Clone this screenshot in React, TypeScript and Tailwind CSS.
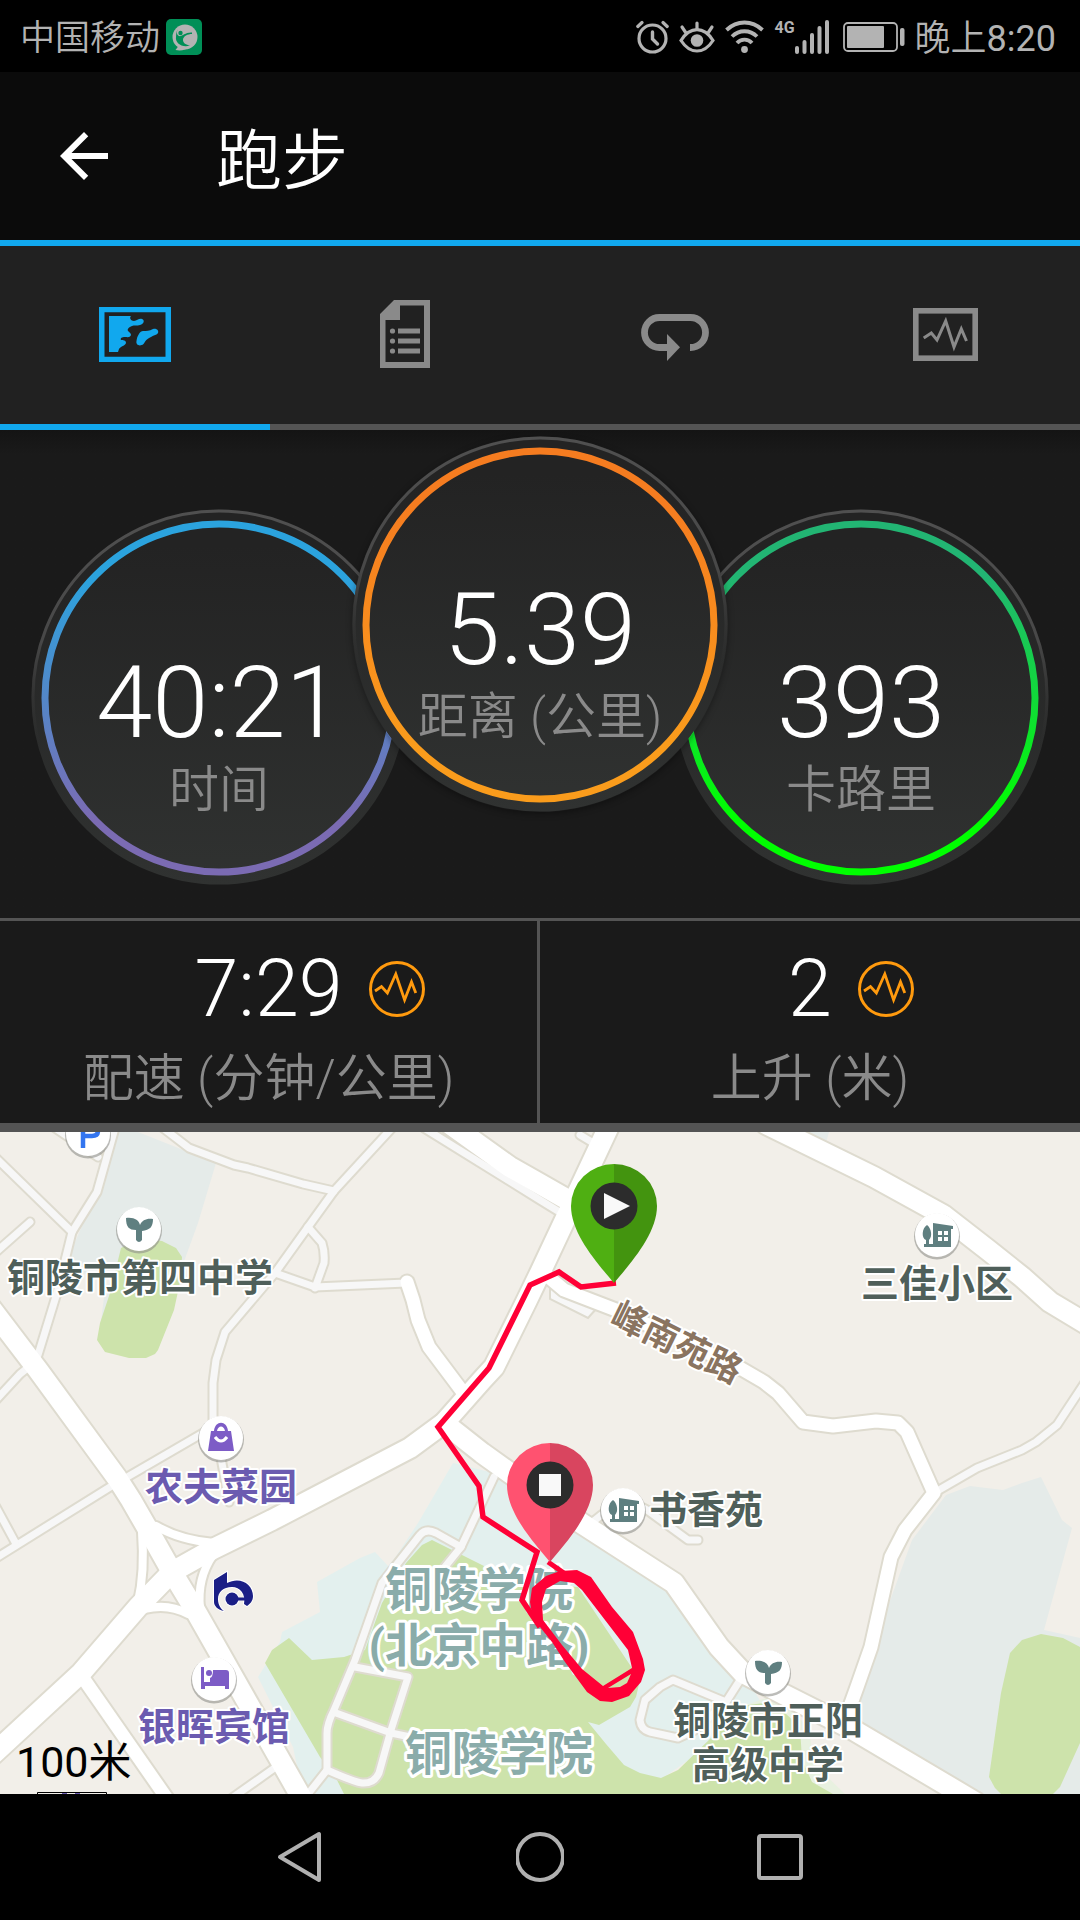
import React, { useState } from 'react';
import clsx from 'clsx';
import { MdArrowBack } from 'react-icons/md';

type IconProps = { className?: string };

const MapIcon = ({ className }: IconProps) => (
  <svg className={className} width="72" height="55" viewBox="0 0 72 55" fill="currentColor">
    <path fillRule="evenodd" d="M0 0H72V55H0ZM5.5 5.2V49.7H66.5V5.2Z" />
    <path d="M10 9H32C30 11 32 14 35 14C38 14 40 11 43 12C46 13 45 17 41 18C38 19 35 18 33 19C30 20 28 22 29 24C30 25 32 26 32 28C31 31 28 30 26 30C23 30 21 31 22 33C24 33 27 33 27 36C26 39 22 39 20 42L19 45H10Z" />
    <path d="M37.500 34C38 29 41 24 44 24C48 24 50 24 54 22C58 21 60 24 59 26C58 28 55 28 52 30C46 33 47 34 44.500 37C41 40 36.500 38 37.500 34Z" />
  </svg>
);

const ReportIcon = ({ className }: IconProps) => (
  <svg className={className} width="50" height="68" viewBox="0 0 50 68" fill="currentColor">
    <path fillRule="evenodd" d="M14 0H50V68H0V14ZM20 5.500V20H5.500V62H44V5.500Z" />
    {[31, 41, 51].map((y) => (
      <g key={y}>
        <circle cx="12.500" cy={y} r="2.600" />
        <rect x="18" y={y - 2.5} width="22" height="5" />
      </g>
    ))}
  </svg>
);

const LapsIcon = ({ className }: IconProps) => (
  <svg className={className} width="68" height="54" viewBox="0 -7 68 54" fill="none">
    <path d="M27 33.500H18.500A15 15 0 0 1 18.500 3.500H49.500A15 15 0 0 1 49.500 33.500H49" stroke="currentColor" strokeWidth="6.800" />
    <path d="M26 20L39 33.300L26 47Z" fill="currentColor" />
  </svg>
);

const ChartIcon = ({ className }: IconProps) => (
  <svg className={className} width="65" height="53" viewBox="0 0 65 53" fill="none" stroke="currentColor">
    <rect x="2.800" y="2.800" width="59.400" height="47.400" strokeWidth="5.600" />
    <path d="M10.700 30L18.300 25L24 32L32.700 13L41 39L48.300 21L53.500 33" strokeWidth="3" />
  </svg>
);

const PulseIcon = ({ className }: IconProps) => (
  <svg className={className} width="56" height="58" viewBox="0 0 56 58" fill="none" stroke="currentColor">
    <circle cx="28" cy="29" r="26.500" strokeWidth="3" />
    <path d="M6 31L12.500 26.500L18.400 33L26.800 14L35.600 40L42.500 22L46.800 33" strokeWidth="2.800" />
  </svg>
);

const TABS = [
  { id: 'map', label: '地图', Icon: MapIcon },
  { id: 'details', label: '详情', Icon: ReportIcon },
  { id: 'laps', label: '计圈', Icon: LapsIcon },
  { id: 'charts', label: '图表', Icon: ChartIcon },
];

const STATS = [
  { value: '7:29', label: '配速 (分钟/公里)' },
  { value: '2', label: '上升 (米)' },
];

const StatusBar = () => (
  <div className="flex h-[72px] items-center justify-between bg-black pt-px pr-6 pl-5 text-[35px] leading-10 text-[#b3b3b3]">
    <div className="flex items-center gap-1.5">
      <span className="pt-1 font-[350]">中国移动</span>
      <svg width="36" height="36" viewBox="0 0 36 36">
        <rect width="36" height="36" rx="5" fill="#008f57" />
        <circle cx="19" cy="18" r="12.500" fill="#b3b3b3" />
        <path d="M14 25L9.500 31C15 32 20 31 23 28Z" fill="#b3b3b3" />
        <circle cx="14.500" cy="14" r="2.200" fill="#008f57" />
        <path d="M12 10C10 13 11 16 13 17C16 18 19 13 26 13.500V15C22 15 17 17 17 21C17 24 20 26 24 26.500C16 29 9 24 10 18C10 14 11 11 12 10Z" fill="#008f57" />
      </svg>
    </div>

    <div className="flex items-center gap-2.5">
      {/* alarm */}
      <svg width="33" height="34" viewBox="0 0 33 34" fill="none" stroke="currentColor" strokeLinecap="round">
        <circle cx="16.500" cy="18.500" r="13.500" strokeWidth="3.200" />
        <path d="M16.500 12V19L21.500 24" strokeWidth="3.400" />
        <path d="M1.800 6.500L6 2.500M31.200 6.500L27 2.500" strokeWidth="3.200" />
      </svg>
      {/* eye comfort */}
      <svg width="36" height="34" viewBox="0 0 36 34" fill="none" stroke="currentColor" strokeLinecap="round">
        <path d="M2 20.500C11 6 25 6 34 20.500C25 34.500 11 34.500 2 20.500Z" strokeWidth="3.200" />
        <circle cx="18" cy="20.500" r="6.300" fill="currentColor" stroke="none" />
        <path d="M18 3V9M3 7L7 13M33 7L29 13" strokeWidth="3.200" />
      </svg>
      {/* wifi */}
      <svg width="39" height="34" viewBox="0 0 39 34" fill="none" stroke="currentColor">
        <path d="M1.500 10C12 0 27 0 37.500 10" strokeWidth="3.800" />
        <path d="M7 16.500C14 9.500 25 9.500 32 16.500" strokeWidth="3.800" />
        <path d="M12 23C16 18.500 23 18.500 27 23" strokeWidth="3.800" />
        <circle cx="19.500" cy="29.500" r="3.400" fill="currentColor" stroke="none" />
      </svg>
      <div className="mr-1 flex items-start">
        <span className="text-base leading-4 font-bold">4G</span>
        <svg width="34" height="34" viewBox="0 0 34 34" fill="currentColor">
          <rect x="0" y="26" width="4" height="8" rx="2" />
          <rect x="7.500" y="20" width="4" height="14" rx="2" />
          <rect x="15" y="13" width="4" height="21" rx="2" />
          <rect x="22.500" y="6" width="4" height="28" rx="2" />
          <rect x="30" y="0" width="4" height="34" rx="2" />
        </svg>
      </div>
      {/* battery */}
      <svg width="62" height="30" viewBox="0 0 62 30" fill="currentColor">
        <rect x="1" y="1" width="53" height="28" rx="4" fill="none" stroke="currentColor" strokeWidth="1.800" />
        <rect x="4" y="4" width="37" height="22" rx="1" />
        <rect x="57" y="6" width="4.500" height="18" rx="2" />
      </svg>
      <span className="pt-1 text-4xl leading-10">
        <span className="font-[350]">晚上</span>8:20
      </span>
    </div>
  </div>
);

interface GaugeProps {
  id: string;
  value: string;
  label: string;
  from: string;
  to: string;
  className?: string;
}

const Gauge: React.FC<GaugeProps> = ({ id, value, label, from, to, className }) => (
  <div className={clsx('relative size-[376px] shrink-0 rounded-full pt-[141px] text-center', className)}>
    <svg className="absolute inset-0 size-full" viewBox="0 0 376 376">
      <defs>
        <linearGradient id={`${id}-ring`} x1="0" y1="0" x2="0" y2="1">
          <stop offset="0.150" stopColor={from} />
          <stop offset="0.850" stopColor={to} />
        </linearGradient>
        <linearGradient id={`${id}-disc`} x1="0" y1="0" x2="0" y2="1">
          <stop offset="0.100" stopColor="#232323" />
          <stop offset="1" stopColor="#303231" />
        </linearGradient>
        <linearGradient id={`${id}-rim`} x1="0" y1="0" x2="0" y2="1">
          <stop offset="0" stopColor="#505050" />
          <stop offset="0.350" stopColor="#484848" />
          <stop offset="0.650" stopColor="#303030" stopOpacity="0" />
        </linearGradient>
      </defs>
      <circle cx="188" cy="188" r="187.500" fill={`url(#${id}-disc)`} />
      <circle cx="188" cy="188" r="186" fill="none" stroke={`url(#${id}-rim)`} strokeWidth="3" />
      <circle cx="188" cy="189" r="174" fill="none" stroke={`url(#${id}-ring)`} strokeWidth="7" />
    </svg>
    <div className="relative text-[101px] leading-[106px] font-light text-white">{value}</div>
    <div className="relative text-[50px] leading-[68px] font-[350] text-[#8a8a8a]">{label}</div>
  </div>
);

// Roads: every one is drawn twice, a wide casing first and the surface over it
const SIDE_ROADS = [
  'M55 -4L98 25',
  'M115 -4L97 60L72 100L57 161L38 223',
  'M-4 26L72 100',
  'M-4 120L30 90',
  'M30 234L20 242L-4 268',
  'M163 -4L189 16L234 33L248 36L303 52L334 59',
  'M392 -4L334 59L308 95L275 141L225 200L216 228L213 251V288',
  'M308 95L322 111Q325 120 324 131L315 156',
  'M275 141L315 155L406 151',
  'M424 -4L540 68L566 84',
  'M580 3L595 12',
  'M939 358L977 336L1022 318L1036 310L1057 293L1084 252',
  'M203 301L110 355L-4 426',
  'M-4 375L15 410',
  'M220 320L229 370',
  'M232 666L280 632',
  'M494 345L461 415L436 401Q426 396 420 403L382 451L355 528L334 578Q327 592 327 601V638L308 662',
  'M461 415L444 436',
  'M355 535L408 545L391 598L379 641Q374 652 362 651Q354 650 327 638',
  'M336 581L391 601L420 607',
  'M742 545L726 570L673 548L660 555L645 568L640 588Q641 598 650 600L678 606L695 598L714 581',
  'M590 392L623 366L647 378L688 408H698',
];

const RAMPS = [
  'M142 400Q145 440 138 470',
  'M156 394Q180 408 214 411',
  'M145 477Q168 471 188 482',
  'M213 423Q197 446 200 476',
];

const STREETS = [
  'M407 150L413 168L418 188L429 215L465 263',
  'M545 142L564 158L616 178L740 236L764 250L778 261L803 290L833 294L876 289L898 291L907 300L934 361L905 398L891 425L871 515L857 555L848 580',
  'M81 543L168 668',
];

const MAIN_ROADS = [
  'M-10 175L38 238L117 346L131 368L150 401L172 440L195 478L220 522L304 670',
  'M-10 625L81 541L138 475L172 440L213 417L272 388L410 316L444 291L482 248L494 235L527 168L540 141L610 -8',
  'M444 291L482 321L510 341L581 391L643 431L674 451L695 481L719 515L743 541L781 561L850 596L975 670',
  'M766 -8L874 45L943 83L988 118L1022 145L1050 170L1090 194',
  'M450 -8L510 35L540 52L568 68',
];

const ROAD_LAYERS = [
  { paths: SIDE_ROADS, width: 7, casing: 11, color: '#f7f7f7' },
  { paths: RAMPS, width: 8, casing: 12, color: '#ffffff' },
  { paths: STREETS, width: 13, casing: 17, color: '#ffffff' },
  { paths: MAIN_ROADS, width: 20, casing: 24, color: '#ffffff' },
];

interface PlaceProps {
  x: number;
  y: number;
  children: React.ReactNode;
}

const Badge: React.FC<PlaceProps> = ({ x, y, children }) => (
  <g transform={`translate(${x} ${y})`}>
    <circle cy="1.500" r="23" fill="#8f8f8a" opacity="0.600" />
    <circle r="22" fill="#ffffff" />
    {children}
  </g>
);

const School = () => (
  <path d="M-13 -11C-5 -12 0 -9 1 -4C3 -9 8 -11 14 -10C14 -2 11 1 3 2V11Q0 15 -3 11V1C-10 1 -13 -2 -13 -11Z" fill="#5f7f80" />
);

const Estate = () => (
  <g fill="#5f7f80">
    <path d="M-4 -12L16 -9V-6L14 -6V12H-13V9H-11V5C-16 3 -15 -7 -10 -10C-6 -7 -4 1 -8 5V9H-4Z" />
    <path d="M1 -4H5V0H1ZM7 -4H11V0H7ZM1 2H5V6H1ZM7 2H11V6H7Z" fill="#ffffff" />
  </g>
);

const Pin: React.FC<PlaceProps & { left: string; right: string }> = ({ x, y, left, right, children }) => (
  <g transform={`translate(${x} ${y})`}>
    <path d="M0 -42A43 42 0 0 0 -43 0C-43 28 -16 58 0 77Z" fill={left} />
    <path d="M0 -42A43 42 0 0 1 43 0C43 28 16 58 0 77Z" fill={right} />
    <circle r="23.500" fill="#2c2c2c" />
    {children}
  </g>
);

const RouteMap = () => (
  <svg className="block h-auto w-full bg-[#f2efe9] font-bold" viewBox="0 0 1080 662">
    {/* blocks */}
    <g fill="#e5ebe9">
      <path d="M117 0H138L216 31L198 91L182 135L110 165L101 190L104 165L112 144L66 140L75 110L97 60Z" />
      <path d="M808 0H829L826 11Z" />
      <path d="M946 363L970 354L1003 358L1022 351L1041 345L1062 388L1072 396L1044 498L1080 506V662H984L850 596L857 560L912 408Z" />
    </g>
    <path d="M453 331L510 345L643 431L695 481L743 541L764 575L640 662H312L300 648L293 615L258 545L280 510L282 500L320 480L317 450L360 426L375 420L389 435L418 391Z" fill="#e3f0ee" />
    <path d="M740 575L781 561L810 600L812 630L845 662H790Z" fill="#e8f1e0" />
    <g fill="#cde3ab">
      <path d="M121 116L140 106L162 109L176 116L182 125L180 150L174 178L158 218L155 222L146 226H129L105 220L97 208L100 191L110 161Z" />
      <path d="M432 408L486 435L540 452L578 455L640 548L636 565L630 575L599 593L588 590L606 612L624 633L640 641L661 646L678 638L712 605L733 575L764 571L785 581L800 595L802 628L812 650L833 662H344L337 648L320 625L265 531L272 518L289 506L312 528L344 525L365 518L382 471L406 431L422 413Z" />
      <path d="M1041 502L1063 506L1080 515V611L1060 655L1053 662H1001L995 656L989 645L1001 561L1010 521L1022 508Z" />
    </g>

    {/* roads */}
    <path d="M550 156L597 176L588 186L550 167Z" fill="#f7f7f7" stroke="#dedbcf" strokeWidth="2" />
    {ROAD_LAYERS.map((layer) => (
      <g key={layer.casing} fill="none" stroke="#dedbcf" strokeWidth={layer.casing} strokeLinejoin="round" strokeLinecap="round">
        {layer.paths.map((d) => <path key={d} d={d} />)}
      </g>
    ))}
    {ROAD_LAYERS.map((layer) => (
      <g key={layer.width} fill="none" stroke={layer.color} strokeWidth={layer.width} strokeLinejoin="round" strokeLinecap="round">
        {layer.paths.map((d) => <path key={d} d={d} />)}
      </g>
    ))}

    {/* places */}
    <Badge x={88} y={2}>
      <path d="M-5 14V-8H4Q10 -8 10 -3T4 2H-5" fill="none" stroke="#3375ef" strokeWidth="4.500" />
    </Badge>
    <Badge x={139} y={97}><School /></Badge>
    <Badge x={221} y={306}>
      <path d="M-10 -7H-7C-6 -18 6 -18 7 -7H10L13 13H-13ZM-4 -7H4C3 -13 -3 -13 -4 -7Z" fill="#7d5cc6" fillRule="evenodd" />
      <path d="M-6 -1Q0 7 6 -1" fill="none" stroke="#ffffff" strokeWidth="3" />
    </Badge>
    <Badge x={937} y={103}><Estate /></Badge>
    <Badge x={623} y={378}><Estate /></Badge>
    <Badge x={768} y={540}><School /></Badge>
    <Badge x={214} y={547}>
      <path d="M-13 -12H-10V3H-4V-1Q-1 -2 -1 -9H12Q15 -9 15 -6V10H11V7H-9V10H-13Z" fill="#7d5cc6" />
      <circle cx="-5" cy="-6" r="3" fill="#7d5cc6" />
    </Badge>
    <g transform="translate(214 440)" stroke="#ffffff" strokeWidth="2" paintOrder="stroke" fill="#1b1f86">
      <path d="M0 8L13 0V11C26 4 39 12 39 24C39 29 36 32 33 34L30 32C32 22 26 15 18 15C9 15 4 20 4 27C4 33 7 37 10 39C4 38 0 34 0 30Z" />
      <circle cx="18" cy="27" r="6.500" />
      <path d="M22 25.500H32V28.500H22Z" stroke="none" />
    </g>

    <g fontSize="38" fill="#4f5f5a" stroke="#ffffff" strokeWidth="4" strokeLinejoin="round" paintOrder="stroke" textAnchor="middle">
      <text x="140" y="159">铜陵市第四中学</text>
      <text x="937" y="165">三佳小区</text>
      <text x="706" y="391">书香苑</text>
      <text x="768" y="602">铜陵市正阳</text>
      <text x="768" y="646">高级中学</text>
      <text x="221" y="368" fill="#6b5bb0">农夫菜园</text>
      <text x="214" y="608" fill="#6b5bb0">银晖宾馆</text>
      <text fontSize="35" fill="#8a7460" transform="translate(677 210) rotate(26)" y="13">峰南苑路</text>
    </g>
    <g fontSize="47" fill="#8aacaa" stroke="#ffffff" strokeWidth="6" strokeLinejoin="round" paintOrder="stroke" textAnchor="middle">
      <text x="479" y="474">铜陵学院</text>
      <text x="479" y="530">(北京中路)</text>
      <text x="499" y="638">铜陵学院</text>
    </g>

    {/* track */}
    <path d="M616 151L581 155L559 140L530 153L489 236L438 295L479 354L483 385L537 420L522 468L540 495" fill="none" stroke="#ff0036" strokeWidth="5.500" />
    <path d="M548 430L564 441" stroke="#ff0036" strokeWidth="5" />
    <path
      d="M532 456L546 444L560 439L577 438L591 445L612 475L633 500L643 527L645 538L641 550L629 564L612 570L600 569L587 560L565 530L552 510L540 495L532 482L530 470ZM546 457L560 449L574 451L582 458L628 518L632 536L603 554L582 537L562 513L543 488L542 470ZM608 556L631 542L627 551L620 555Z"
      fill="#ff0036"
      fillRule="evenodd"
    />
    <Pin x={614} y={74} left="#4faf12" right="#43940f">
      <path d="M-10 -13L16 0L-10 13Z" fill="#f9f9f9" />
    </Pin>
    <Pin x={550} y={353} left="#ff5270" right="#d9455f">
      <rect x="-11" y="-11" width="22" height="22" fill="#f9f9f9" />
    </Pin>

    {/* scale */}
    <path d="M62 662V660H67V662ZM75 662V660H80V662Z" fill="#6b5bb0" />
    <text x="16" y="645" fontSize="43" fontWeight="400" fill="#000000">100米</text>
    <path d="M37.500 662V660.500H106.500V662" fill="none" stroke="#000000" strokeWidth="1" />
  </svg>
);

const NavBar = () => (
  <nav className="flex h-[126px] items-center justify-center gap-48 bg-black text-[#b0b0b0]">
    <button type="button" aria-label="返回">
      <svg width="48" height="52" viewBox="0 0 48 52" fill="none" stroke="currentColor" strokeWidth="4" strokeLinejoin="round">
        <path d="M43 3V49L4 26Z" />
      </svg>
    </button>
    <button type="button" aria-label="主页">
      <svg width="48" height="52" viewBox="0 0 48 52" fill="none" stroke="currentColor" strokeWidth="4">
        <circle cx="24" cy="26" r="23" />
      </svg>
    </button>
    <button type="button" aria-label="最近任务">
      <svg width="48" height="52" viewBox="0 0 48 52" fill="none" stroke="currentColor" strokeWidth="4">
        <rect x="3" y="5" width="42" height="42" rx="2" />
      </svg>
    </button>
  </nav>
);

const App: React.FC = () => {
  const [activeTab, setActiveTab] = useState('map');

  return (
    <div className="flex min-h-screen flex-col bg-black font-['Roboto','Noto_Sans_CJK_SC',sans-serif]" lang="zh-CN">
      <StatusBar />

      <header className="flex h-[174px] items-center gap-24 border-b-[6px] border-[#11a8ee] bg-[#0b0b0b] pl-12 text-white">
        <button type="button" aria-label="返回">
          <MdArrowBack className="size-[72px]" />
        </button>
        <h1 className="pt-3 text-[66px] leading-20 font-[350]">跑步</h1>
      </header>

      <div role="tablist" className="grid grid-cols-4 bg-[#212121]">
        {TABS.map(({ id, label, Icon }) => (
          <button
            key={id}
            type="button"
            role="tab"
            aria-label={label}
            aria-selected={activeTab === id}
            onClick={() => setActiveTab(id)}
            className={clsx(
              'flex h-[184px] items-center justify-center border-b-[6px] pb-0.5',
              activeTab === id ? 'border-[#11a8ee] text-[#11a8ee]' : 'border-[#545454] text-[#8a8a8a]'
            )}
          >
            <Icon />
          </button>
        ))}
      </div>

      <section className="flex items-start justify-center bg-[#1a1a1a] bg-linear-to-b from-[#141414] to-[#1a1a1a] to-5% pt-1.5 pb-[33px]">
        <Gauge id="time" value="40:21" label="时间" from="#2ba3de" to="#7b6bb3" className="mt-[73px]" />
        <Gauge
          id="distance"
          value="5.39"
          label="距离 (公里)"
          from="#f57c20"
          to="#fa9c1c"
          className="z-10 -mx-[55px] shadow-[0_2px_6px_rgba(0,0,0,0.35)]"
        />
        <Gauge id="calories" value="393" label="卡路里" from="#22b573" to="#00ff00" className="mt-[73px]" />
      </section>

      <dl className="grid grid-cols-2 divide-x-3 divide-[#545454] border-t-3 border-b-9 border-[#545454] bg-[#1a1a1a]">
        {STATS.map((stat) => (
          <div key={stat.label} className="flex h-[202px] flex-col-reverse justify-end pt-5 text-center font-light">
            <dt className="pt-0.5 text-[51px] leading-20 font-[350] text-[#8a8a8a]">{stat.label}</dt>
            <dd className="grid grid-cols-[1fr_auto_1fr] items-center gap-[26px] text-[79px] leading-24 text-white">
              <span className="col-start-2">{stat.value}</span>
              <PulseIcon className="text-[#ff9a0e]" />
            </dd>
          </div>
        ))}
      </dl>

      <RouteMap />
      <NavBar />
    </div>
  );
};

export default App;
